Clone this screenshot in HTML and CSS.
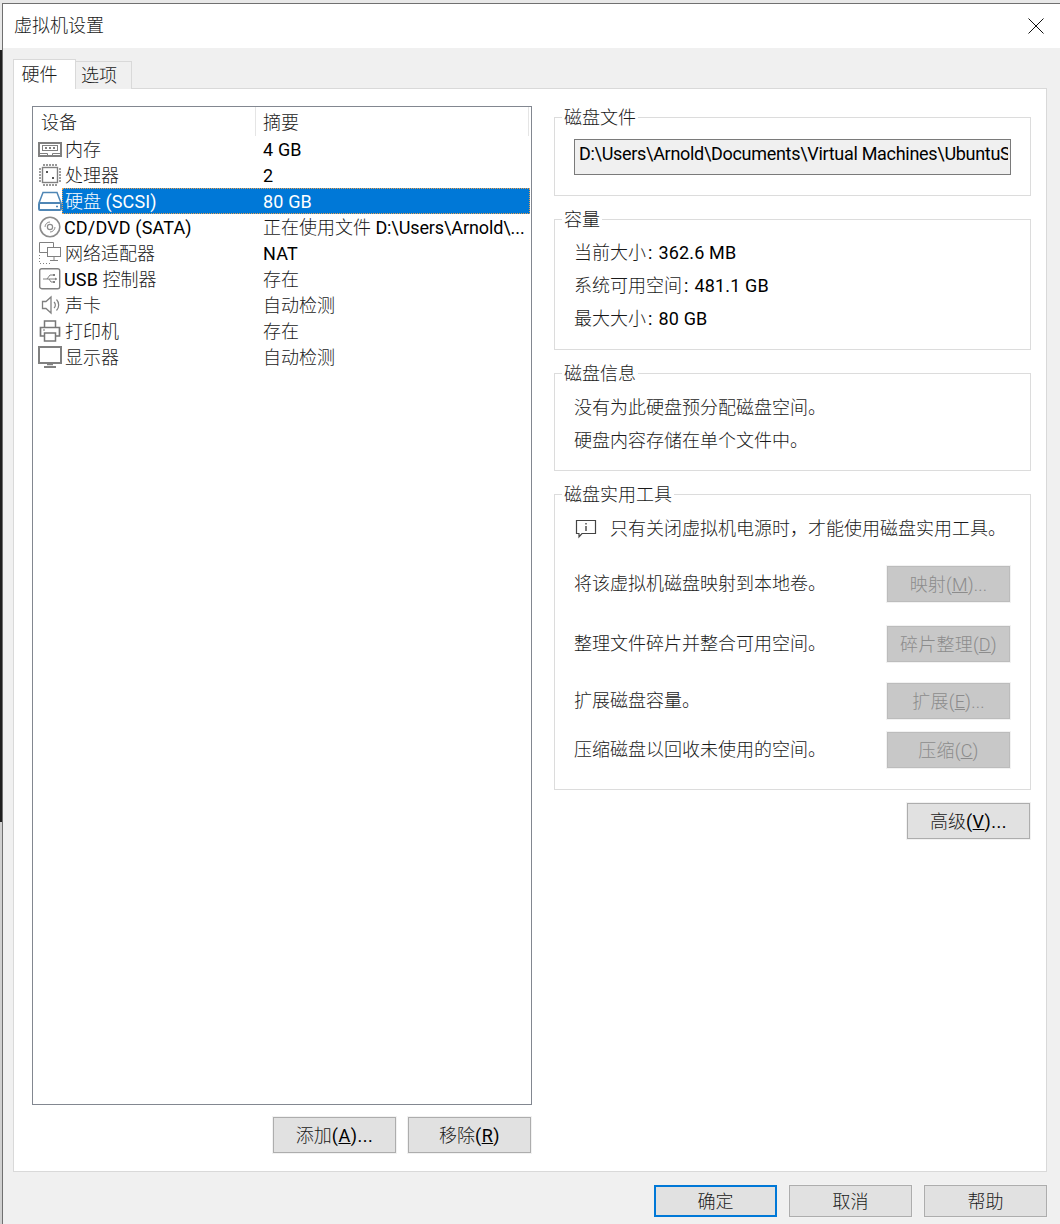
FILE: index.html
```html
<!DOCTYPE html>
<html lang="zh-CN">
<head>
<meta charset="utf-8">
<title>虚拟机设置</title>
<link rel="stylesheet" href="styles.css">
</head>
<body>
<div class="window">
  <header class="titlebar">
    <span class="title">虚拟机设置</span>
    <svg class="close" width="16" height="16" viewBox="0 0 16 16"><path d="M0.5 0.5L15.5 15.5M15.5 0.5L0.5 15.5" stroke="#111" stroke-width="1" fill="none"/></svg>
  </header>
  <main class="body">
    <nav class="tabs">
      <span class="tab tab-active">硬件</span>
      <span class="tab">选项</span>
    </nav>
    <section class="panel">
      <div class="left">
        <div class="list">
          <div class="list-head">
            <span class="head-name">设备</span>
            <span class="head-val">摘要</span>
          </div>
          <div class="row">
            <span class="ico"><svg width="24" height="24" viewBox="0 0 24 24" fill="none" stroke="#808080"><rect x="1" y="6" width="22" height="13" stroke-width="2"/><rect x="4.500" y="8.500" width="15" height="5"/><path d="M7 10h2v2H7zM11 10h2v2h-2zM15 10h2v2h-2z" fill="#808080" stroke="none"/><path d="M1 16.500h8.500v2h5v-2H23" stroke-width="1"/></svg></span>
            <div class="cells"><span class="name">内存</span><span class="val lat">4 GB</span></div>
          </div>
          <div class="row">
            <span class="ico"><svg width="24" height="24" viewBox="0 0 24 24" fill="none" stroke="#808080"><rect x="4.500" y="4.500" width="15" height="15" stroke-width="1.400"/><path d="M6 1v2M9 1v2M12 1v2M15 1v2M18 1v2M6 21v2M9 21v2M12 21v2M15 21v2M18 21v2M1 6h2M1 9h2M1 12h2M1 15h2M1 18h2M21 6h2M21 9h2M21 12h2M21 15h2M21 18h2" stroke-width="1.600"/><path d="M8 8h2v2H8zM14 14h2v2h-2z" fill="#555" stroke="none"/></svg></span>
            <div class="cells"><span class="name">处理器</span><span class="val lat">2</span></div>
          </div>
          <div class="row row-selected">
            <span class="ico"><svg width="24" height="24" viewBox="0 0 24 24" fill="none" stroke="#4f86b5"><path d="M1 14L5 3.500H19L23 14" stroke-width="1.500"/><rect x="1" y="14" width="22" height="7" rx="1" stroke-width="2"/><path d="M18 17.500h2" stroke-width="1.500"/></svg></span>
            <div class="cells"><span class="name">硬盘 <span class="lat">(SCSI)</span></span><span class="val lat">80 GB</span></div>
          </div>
          <div class="row">
            <span class="ico"><svg width="24" height="24" viewBox="0 0 24 24" fill="none" stroke="#8c8c8c"><circle cx="12" cy="12" r="9.800" stroke-width="1.600"/><circle cx="12" cy="12" r="2.600" stroke-width="1.200"/><path d="M7 12a5 5 0 0 1 5-5M17 12a5 5 0 0 1-5 5" stroke-width="1"/></svg></span>
            <div class="cells"><span class="name name-cd lat">CD/DVD (SATA)</span><span class="val">正在使用文件 <span class="lat lat-tight">D:\Users\Arnold\...</span></span></div>
          </div>
          <div class="row">
            <span class="ico"><svg width="24" height="24" viewBox="0 0 24 24" fill="none" stroke="#808080"><path d="M10 11.500H1.500V1.500H15.500V6" stroke-width="1"/><rect x="9.500" y="6.500" width="13" height="9" stroke-width="1"/><path d="M16 16v3M12 19.500h8" stroke-width="1"/><path d="M1.500 14v8.500H14" stroke-dasharray="1 2" stroke-width="1"/></svg></span>
            <div class="cells"><span class="name">网络适配器</span><span class="val lat">NAT</span></div>
          </div>
          <div class="row">
            <span class="ico"><svg width="24" height="24" viewBox="0 0 24 24" fill="none" stroke="#808080"><rect x="1.700" y="1.700" width="20" height="20" rx="2" stroke-width="1.400"/><path d="M5 12h14M9 12l3-4h3M11 12l2 3h2" stroke-width="1"/><path d="M15 7h2v2h-2zM15 14h2v2h-2zM19 12l-2-1.500v3z" fill="#808080" stroke="none"/></svg></span>
            <div class="cells"><span class="name name-cd"><span class="lat">USB</span> 控制器</span><span class="val">存在</span></div>
          </div>
          <div class="row">
            <span class="ico"><svg width="24" height="24" viewBox="0 0 24 24" fill="none" stroke="#808080"><path d="M4.500 8.500H8L13 4V20L8 15.500H4.500Z" stroke-width="1.300"/><path d="M16 9a4 4 0 0 1 0 6M18.500 6.500a8 8 0 0 1 0 11" stroke-width="1.200"/></svg></span>
            <div class="cells"><span class="name">声卡</span><span class="val">自动检测</span></div>
          </div>
          <div class="row">
            <span class="ico"><svg width="24" height="24" viewBox="0 0 24 24" fill="none" stroke="#777"><path d="M6.500 8V2H17.500V8" stroke-width="1.500"/><path d="M6 17H2.500V8.500H21.500V17H18" stroke-width="1.700"/><rect x="6.500" y="14" width="11" height="8" stroke-width="1.500"/><path d="M5 11h2" stroke-width="1"/></svg></span>
            <div class="cells"><span class="name">打印机</span><span class="val">存在</span></div>
          </div>
          <div class="row">
            <span class="ico"><svg width="24" height="24" viewBox="0 0 24 24" fill="none" stroke="#808080"><rect x="1" y="2" width="22" height="16" stroke-width="2"/><path d="M9 19.500h6" stroke-width="1.500"/><path d="M6 22h12" stroke-width="2"/></svg></span>
            <div class="cells"><span class="name">显示器</span><span class="val">自动检测</span></div>
          </div>
        </div>
        <div class="list-actions">
          <button class="btn">添加<span class="lat">(<u>A</u>)...</span></button>
          <button class="btn">移除<span class="lat">(<u>R</u>)</span></button>
        </div>
      </div>
      <div class="right">
        <fieldset class="group group-file">
          <legend>磁盘文件</legend>
          <div class="path"><span class="path-text lat">D:\Users\Arnold\Documents\Virtual Machines\UbuntuS</span></div>
        </fieldset>
        <fieldset class="group group-cap">
          <legend>容量</legend>
          <div class="line">当前大小<span class="lat colon">:</span><span class="lat">362.6 MB</span></div>
          <div class="line">系统可用空间<span class="lat colon">:</span><span class="lat">481.1 GB</span></div>
          <div class="line">最大大小<span class="lat colon">:</span><span class="lat">80 GB</span></div>
        </fieldset>
        <fieldset class="group group-info">
          <legend>磁盘信息</legend>
          <div class="line">没有为此硬盘预分配磁盘空间。</div>
          <div class="line">硬盘内容存储在单个文件中。</div>
        </fieldset>
        <fieldset class="group group-tools">
          <legend>磁盘实用工具</legend>
          <div class="notice">
            <svg width="22" height="20" viewBox="0 0 22 20" fill="none" stroke="#444"><path d="M1.500 1.500H20.500V14.500H7L4 18V14.500H1.500Z" stroke-width="1.200"/><path d="M11 4v1.500M11 7v5" stroke-width="1.400"/></svg>
            <span>只有关闭虚拟机电源时，才能使用磁盘实用工具。</span>
          </div>
          <div class="tool tool-a"><span>将该虚拟机磁盘映射到本地卷。</span><button class="btn btn-off">映射(<u>M</u>)...</button></div>
          <div class="tool tool-b"><span>整理文件碎片并整合可用空间。</span><button class="btn btn-off">碎片整理(<u>D</u>)</button></div>
          <div class="tool tool-c"><span>扩展磁盘容量。</span><button class="btn btn-off">扩展(<u>E</u>)...</button></div>
          <div class="tool tool-d"><span>压缩磁盘以回收未使用的空间。</span><button class="btn btn-off">压缩(<u>C</u>)</button></div>
        </fieldset>
        <div class="adv"><button class="btn">高级<span class="lat">(<u>V</u>)...</span></button></div>
      </div>
    </section>
    <footer class="footer">
      <button class="btn btn-foot btn-default">确定</button>
      <button class="btn btn-foot">取消</button>
      <button class="btn btn-foot">帮助</button>
    </footer>
  </main>
</div>
</body>
</html>
```
FILE: styles.css
```css
* { box-sizing: border-box; }
html, body { margin: 0; height: 1224px; overflow: hidden; }
body {
  background: linear-gradient(to bottom, #e8e8e8 0, #e8e8e8 50px, #1f1f1f 50px, #1f1f1f 822px, #d0d0d0 822px);
  font: 300 18px/26px Roboto, "Noto Sans CJK SC", sans-serif;
  color: #1a1a1a;
}
.lat { font-weight: 400; color: #000; letter-spacing: 0.15px; }
.lat-tight { letter-spacing: -0.1px; }
.window {
  margin: 3px 0 0 2px;
  height: 1221px;
  border-top: 1px solid #707070;
  border-left: 1px solid #707070;
  display: flex;
  flex-direction: column;
  background: #fff;
}
.titlebar {
  height: 44px;
  flex: none;
  padding: 0 16px 0 11px;
  display: flex;
  align-items: center;
  justify-content: space-between;
}
.body {
  flex: 1;
  background: #f0f0f0;
  padding: 11px 13px 7px 10px;
  display: flex;
  flex-direction: column;
}
.tabs { display: flex; align-items: flex-end; height: 30px; flex: none; position: relative; z-index: 1; margin-bottom: -1px; }
.tab {
  width: 56px;
  height: 28px;
  border: 1px solid #d9d9d9;
  border-bottom: none;
  border-left: none;
  text-align: center;
  line-height: 28px;
  background: #f0f0f0;
  padding-right: 9px;
}
.tab-active {
  width: 63px;
  height: 30px;
  background: #fff;
  border-left: 1px solid #d9d9d9;
  line-height: 29px;
  padding: 0 10px 0 0;
}
.panel {
  flex: 1;
  display: flex;
  gap: 22px;
  background: #fff;
  border: 1px solid #d9d9d9;
  padding: 17px 15px 18px 18px;
  min-height: 0;
}
.left { width: 500px; flex: none; display: flex; flex-direction: column; gap: 12px; }
.list { flex: 1; border: 1px solid #828790; background: #fff; }
.list-head { height: 29px; display: flex; }
.head-name { width: 223px; padding-left: 8px; border-right: 1px solid #e5e5e5; line-height: 32px; }
.head-val { flex: 1; margin-right: 2px; padding-left: 7px; border-right: 1px solid #e5e5e5; line-height: 32px; }
.row { height: 26px; display: flex; }
.ico { width: 29px; flex: none; padding-left: 5px; display: flex; align-items: center; justify-content: center; }
.cells { flex: 1; display: flex; white-space: nowrap; line-height: 28px; height: 26px; }
.name { width: 194px; flex: none; padding-left: 3px; }
.name-cd { padding-left: 2px; }
.val { padding-left: 7px; flex: 1; }
.row-selected .cells { background: #0078d7; color: #fff; outline: 1px dotted #e8a050; outline-offset: -1px; margin-right: 1px; }
.row-selected .lat { color: #fff; }
.list-actions { display: flex; justify-content: flex-end; gap: 12px; flex: none; margin-right: 1px; }
.btn {
  width: 123px;
  height: 36px;
  padding: 2px 0 0;
  border: 1px solid #adadad;
  background: #e1e1e1;
  font: inherit;
  color: #1a1a1a;
  box-shadow: 0 0 0 1px #f2f2f2;
}
.btn .lat { letter-spacing: 0.5px; }
.btn-off { background: #c8c8c8; border-color: #bcbcbc; color: #8c8c8c; letter-spacing: 0.2px; }
.btn-foot { height: 32px; }
.btn-default { border: 2px solid #0078d7; box-shadow: none; }
.right { width: 477px; flex: none; display: flex; flex-direction: column; gap: 12px; }
.group { margin: 0; min-width: 0; border: 1px solid #dcdcdc; padding: 0 20px 0 19px; }
.group legend { margin-left: -12px; padding: 0 2px; line-height: 24px; height: 22px; }
.group-file { padding-top: 11px; padding-bottom: 20px; }
.path { height: 36px; border: 1px solid #7a7a7a; background: #f0f0f0; padding: 0 2px 0 4px; line-height: 28px; overflow: hidden; margin-right: -1px; }
.path-text { display: block; white-space: nowrap; overflow: hidden; letter-spacing: -0.3px; }
.group-cap { padding-top: 6px; padding-bottom: 14px; }
.group-info { padding-top: 7px; padding-bottom: 13px; }
.line { height: 33px; line-height: 33px; }
.colon { margin: 0 6px 0 2px; }
.group-tools { padding-top: 7px; padding-bottom: 21px; }
.notice { display: flex; align-items: center; gap: 13px; height: 33px; padding-left: 1px; }
.tool { display: flex; align-items: center; justify-content: space-between; line-height: 28px; }
.tool-a { margin-top: 21px; }
.tool-b { margin-top: 24px; }
.tool-c { margin-top: 21px; }
.tool-d { margin-top: 13px; }
.adv { display: flex; justify-content: flex-end; margin-top: 1px; padding-right: 1px; }
.footer { display: flex; justify-content: flex-end; gap: 12px; flex: none; margin-top: 13px; }
```
